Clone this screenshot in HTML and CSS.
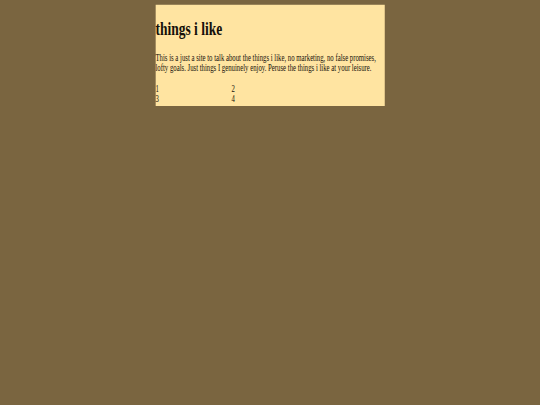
FILE: index.html
```html
<!DOCTYPE html>
<html lang="en">
<head>
<meta charset="utf-8">
<title>things i like</title>
<link rel="stylesheet" href="styles.css">
</head>
<body>
<div class="viewport">
  <div class="stage">
    <main class="sheet">
      <h1 class="title">things i like</h1>
      <p class="intro">This is a just a site to talk about the things i like, no marketing, no false promises, lofty goals. Just things I genuinely enjoy. Peruse the things i like at your leisure.</p>
      <div class="things">
        <div class="thing">1</div>
        <div class="thing">2</div>
        <div class="thing">3</div>
        <div class="thing">4</div>
      </div>
    </main>
  </div>
</div>
</body>
</html>
```
FILE: styles.css
```css
html, body {
  margin: 0;
  padding: 0;
  background: #7a6540;
  overflow: hidden;
}
.viewport {
  width: 540px;
  height: 405px;
  overflow: hidden;
}
.stage {
  width: 1280px;
  height: 680px;
  transform: scale(0.421875, 0.5955);
  transform-origin: 0 0;
  padding-top: 8px;
  box-sizing: border-box;
  font-family: "Liberation Serif", "Times New Roman", serif;
  color: #15100a;
}
.sheet {
  width: 543px;
  margin: 0 auto;
  background: #ffe4a1;
  display: flow-root;
}
.title {
  font-size: 32px;
  font-weight: bold;
  margin: 21.44px 0;
}
.intro {
  font-size: 16px;
  margin: 16px 0;
}
.things {
  display: grid;
  grid-template-columns: 180px 180px;
  font-size: 16px;
  margin-bottom: 2px;
}
```
